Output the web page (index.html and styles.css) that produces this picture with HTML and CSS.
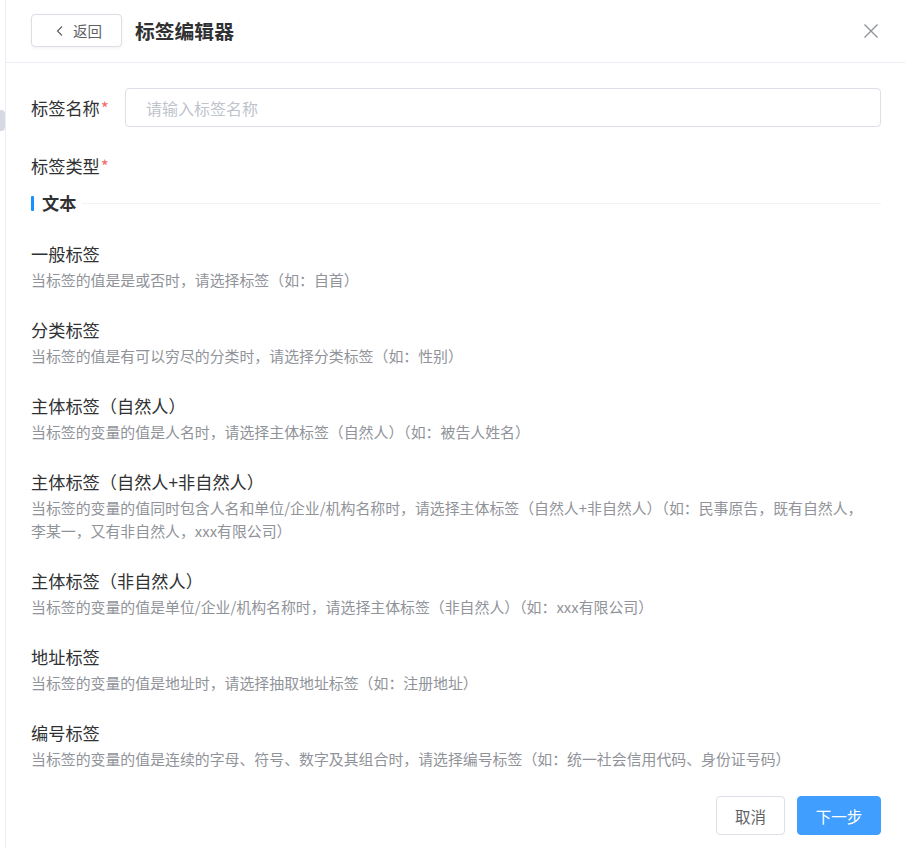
FILE: index.html
```html
<!DOCTYPE html>
<html lang="zh-CN">
<head>
<meta charset="utf-8">
<link rel="stylesheet" href="styles.css">
</head>
<body>
<div class="page">
  <div class="side">
    <div class="side-pill"></div>
  </div>
  <div class="drawer">
    <header class="header">
      <button class="back-btn">
        <svg class="chev" width="10" height="12" viewBox="0 0 10 12"><path d="M7 1.5 L2.5 6 L7 10.5" fill="none" stroke="#606266" stroke-width="1.2"/></svg>
        <span>返回</span>
      </button>
      <h1 class="title">标签编辑器</h1>
      <svg class="close" width="16" height="16" viewBox="0 0 16 16"><path d="M1.5 1.5 L14.5 14.5 M14.5 1.5 L1.5 14.5" stroke="#909399" stroke-width="1.4" fill="none"/></svg>
    </header>
    <main class="body">
      <div class="form-row">
        <label class="label">标签名称<span class="req">*</span></label>
        <input class="input" type="text" placeholder="请输入标签名称">
      </div>
      <div class="label type-label">标签类型<span class="req">*</span></div>
      <div class="section">
        <span class="section-bar"></span>
        <span class="section-title">文本</span>
        <span class="section-line"></span>
      </div>
      <div class="item">
        <div class="item-title">一般标签</div>
        <div class="item-desc">当标签的值是是或否时，请选择标签（如：自首）</div>
      </div>
      <div class="item">
        <div class="item-title">分类标签</div>
        <div class="item-desc">当标签的值是有可以穷尽的分类时，请选择分类标签（如：性别）</div>
      </div>
      <div class="item">
        <div class="item-title">主体标签（自然人）</div>
        <div class="item-desc">当标签的变量的值是人名时，请选择主体标签（自然人）（如：被告人姓名）</div>
      </div>
      <div class="item">
        <div class="item-title">主体标签（自然人+非自然人）</div>
        <div class="item-desc">当标签的变量的值同时包含人名和单位/企业/机构名称时，请选择主体标签（自然人+非自然人）（如：民事原告，既有自然人，李某一，又有非自然人，xxx有限公司）</div>
      </div>
      <div class="item">
        <div class="item-title">主体标签（非自然人）</div>
        <div class="item-desc">当标签的变量的值是单位/企业/机构名称时，请选择主体标签（非自然人）（如：xxx有限公司）</div>
      </div>
      <div class="item">
        <div class="item-title">地址标签</div>
        <div class="item-desc">当标签的变量的值是地址时，请选择抽取地址标签（如：注册地址）</div>
      </div>
      <div class="item">
        <div class="item-title">编号标签</div>
        <div class="item-desc">当标签的变量的值是连续的字母、符号、数字及其组合时，请选择编号标签（如：统一社会信用代码、身份证号码）</div>
      </div>
    </main>
    <footer class="footer">
      <button class="btn btn-cancel">取消</button>
      <button class="btn btn-primary">下一步</button>
    </footer>
  </div>
</div>
</body>
</html>
```
FILE: styles.css
```css
* { box-sizing: border-box; }
html, body { margin: 0; padding: 0; background: #fff; }
body {
  font-family: "Noto Sans CJK SC", "Noto Sans", sans-serif;
  color: #303133;
}
.page {
  display: flex;
  width: 905px;
  height: 848px;
  overflow: hidden;
}
.side {
  width: 6px;
  flex: none;
  border-right: 1px solid #ebeef5;
  padding-top: 110px;
}
.side-pill {
  width: 5px;
  height: 21px;
  background: #d5d9e0;
  border-radius: 0 4px 4px 0;
}
.drawer {
  flex: 1;
  display: flex;
  flex-direction: column;
  min-width: 0;
}
.header {
  height: 63px;
  flex: none;
  border-bottom: 1px solid #ebeef5;
  display: flex;
  align-items: center;
  padding: 0 26px 0 25px;
}
.back-btn {
  width: 91px;
  height: 33px;
  border: 1px solid #dcdfe6;
  border-radius: 4px;
  background: #fff;
  box-shadow: 0 1px 3px rgba(0,0,0,0.06);
  display: flex;
  align-items: center;
  justify-content: center;
  gap: 8px;
  font-family: inherit;
  font-size: 14.5px;
  color: #606266;
  padding: 0 0 0 4px;
  margin-top: -1px;
}
.chev { display: block; }
.title {
  margin: 0 0 0 13px;
  font-size: 19.8px;
  font-weight: 700;
  color: #303133;
  flex: 1;
  line-height: 26px;
}
.close { display: block; margin-top: -1px; }
.body {
  flex: 1;
  padding: 25px 24px 0 25px;
}
.form-row {
  display: flex;
  align-items: center;
  height: 39px;
}
.label {
  font-size: 17.2px;
  line-height: 24px;
  color: #303133;
}
.form-row .label { width: 94px; flex: none; }
.req { color: #f56c6c; margin-left: 1px; }
.input {
  flex: 1;
  height: 39px;
  border: 1px solid #dcdfe6;
  border-radius: 4px;
  padding: 0 20px;
  font-family: inherit;
  font-size: 16px;
  color: #606266;
  outline: none;
}
.input::placeholder { color: #c0c4cc; }
.type-label { margin-top: 27px; }
.section {
  display: flex;
  align-items: center;
  margin-top: 13px;
  height: 24px;
}
.section-bar {
  width: 3px;
  height: 15px;
  background: #1890ff;
  border-radius: 1px;
  flex: none;
}
.section-title {
  font-size: 17.2px;
  font-weight: 700;
  margin-left: 8px;
  line-height: 24px;
}
.section-line {
  flex: 1;
  height: 1px;
  background: #f2f3f5;
  margin-left: 6px;
}
.item { margin-top: 27px; }
.item-title {
  font-size: 17.2px;
  line-height: 24px;
  color: #303133;
}
.item-desc {
  margin-top: 2px;
  padding-right: 12px;
  font-size: 14.9px;
  line-height: 23px;
  color: #909399;
}
.footer {
  flex: none;
  display: flex;
  justify-content: flex-end;
  gap: 12px;
  padding: 0 24px 13px 0;
}
.btn {
  height: 39px;
  border-radius: 4px;
  font-family: inherit;
  font-size: 15.5px;
  padding: 0;
}
.btn-cancel {
  width: 69px;
  border: 1px solid #dcdfe6;
  background: #fff;
  color: #606266;
}
.btn-primary {
  width: 84px;
  border: 1px solid #409eff;
  background: #409eff;
  color: #fff;
}
```
